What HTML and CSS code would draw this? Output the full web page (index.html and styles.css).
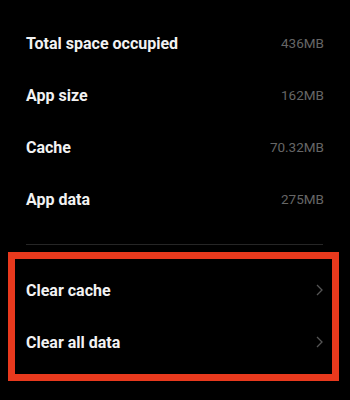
FILE: index.html
```html
<!DOCTYPE html>
<html lang="en">
<head>
<meta charset="utf-8">
<link rel="stylesheet" href="styles.css">
</head>
<body>
<div class="screen">
  <div class="list">
    <div class="row"><span class="label">Total space occupied</span><span class="value">436MB</span></div>
    <div class="row"><span class="label">App size</span><span class="value">162MB</span></div>
    <div class="row"><span class="label">Cache</span><span class="value">70.32MB</span></div>
    <div class="row"><span class="label">App data</span><span class="value">275MB</span></div>
  </div>
  <div class="divider"></div>
  <div class="highlight">
    <div class="row action"><span class="label">Clear cache</span>
      <svg class="chevron" width="7" height="12" viewBox="0 0 7 12"><path d="M1 1 L6 6 L1 11" fill="none" stroke="#555" stroke-width="1.3"/></svg>
    </div>
    <div class="row action"><span class="label">Clear all data</span>
      <svg class="chevron" width="7" height="12" viewBox="0 0 7 12"><path d="M1 1 L6 6 L1 11" fill="none" stroke="#555" stroke-width="1.3"/></svg>
    </div>
  </div>
</div>
</body>
</html>
```

FILE: styles.css
```css
html, body {
  margin: 0;
  padding: 0;
  background: #000;
}
.screen {
  width: 350px;
  height: 400px;
  background: #000;
  font-family: Roboto, "Liberation Sans", sans-serif;
  overflow: hidden;
}
.list {
  padding-top: 17px;
}
.row {
  height: 52px;
  display: flex;
  align-items: center;
  justify-content: space-between;
  padding: 0 26px 0 26px;
}
.label {
  color: #f2f2f2;
  font-size: 16px;
  font-weight: 700;
}
.value {
  color: #666;
  font-size: 13.5px;
  font-weight: 400;
}
.divider {
  height: 1px;
  background: #262626;
  margin: 19px 27px 0 26px;
}
.highlight {
  margin: 7px 11px 0 8px;
  border: 7px solid #e8391d;
  padding: 5px 0 6px 0;
}
.row.action {
  padding: 0 9px 0 11px;
}
.chevron {
  display: block;
}
```
